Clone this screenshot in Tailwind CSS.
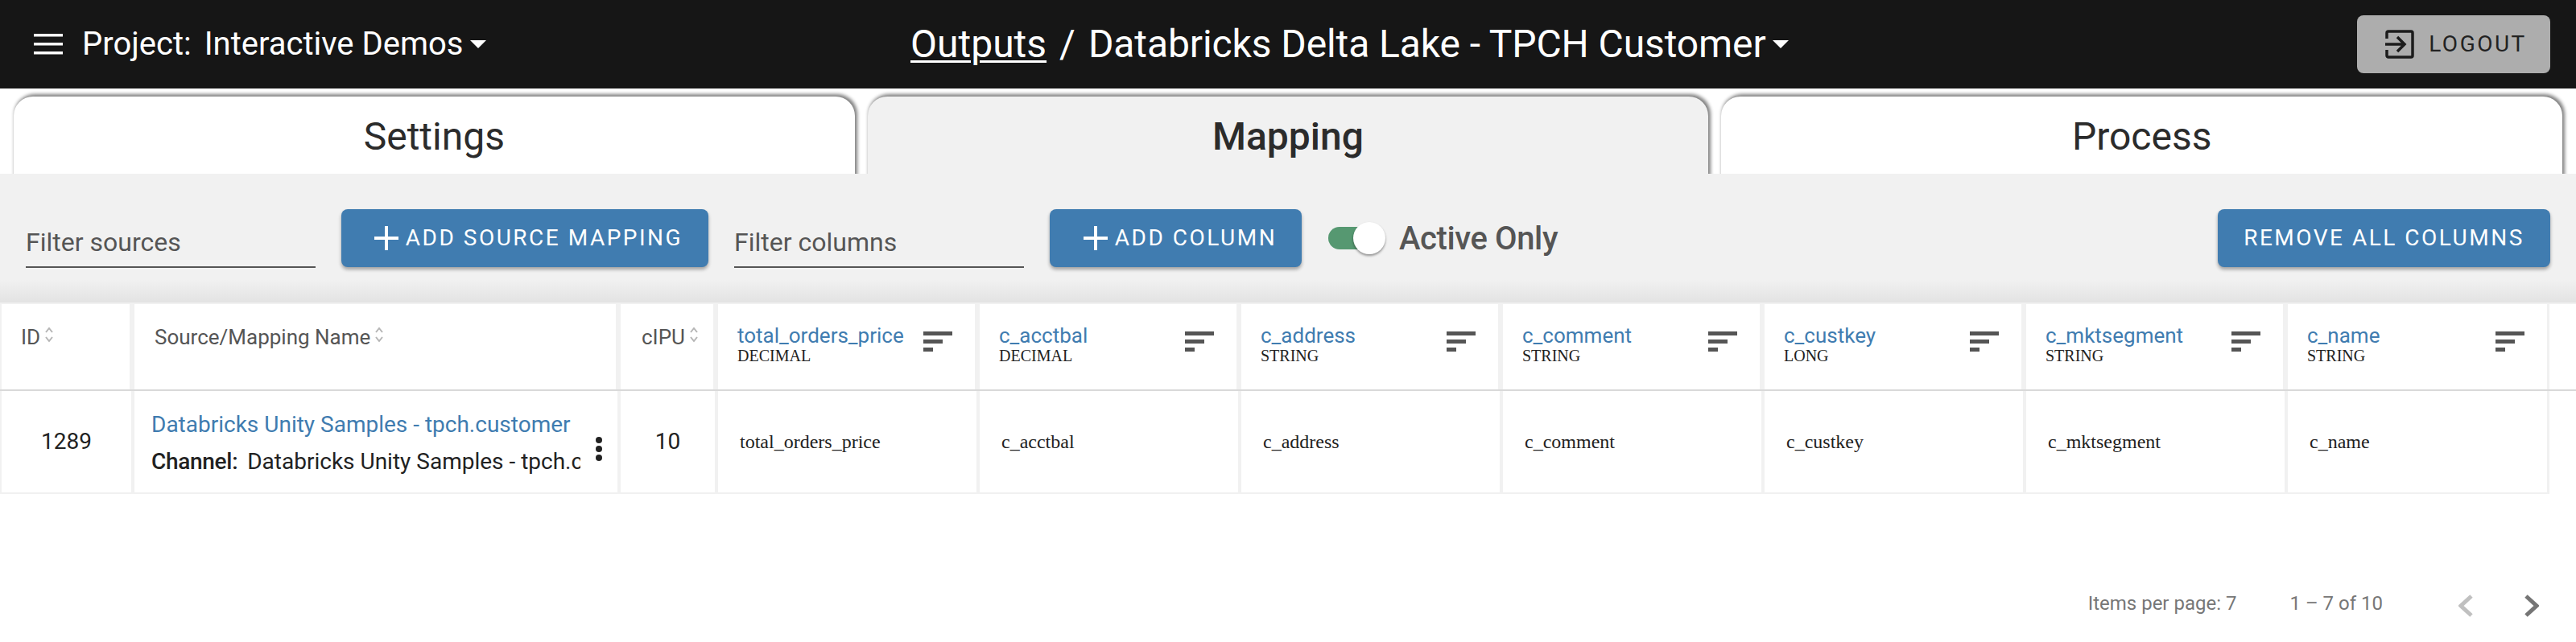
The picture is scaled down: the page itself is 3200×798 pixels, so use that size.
<!DOCTYPE html>
<html lang="en">
<head>
  <meta charset="UTF-8" />
  <title>Mapping</title>
  <script src="https://cdn.jsdelivr.net/npm/@tailwindcss/browser@4"></script>
</head>
<body class="bg-white font-['Roboto',sans-serif] text-[#222] overflow-hidden">
  <!-- top bar -->
  <header class="h-[110px] bg-[#161616] text-white flex items-center">
    <div class="w-[1131px] flex items-center pl-[40px]">
      <svg class="w-[40px] h-[26px] mr-[22px]" viewBox="0 0 40 26" fill="white">
        <rect x="2" y="0" width="36" height="3.5"/><rect x="2" y="11" width="36" height="3.5"/><rect x="2" y="22" width="36" height="3.5"/>
      </svg>
      <span class="text-[40px] whitespace-nowrap"><span class="mr-[16px]">Project:</span>Interactive Demos</span>
      <span class="ml-[8px] w-0 h-0 border-x-[10px] border-x-transparent border-t-[10px] border-t-white"></span>
    </div>
    <div class="flex items-center text-[48px] whitespace-nowrap">
      <a href="#" class="underline underline-offset-4 decoration-[3px]">Outputs</a>
      <span class="mx-[16px]">/</span>
      <span class="tracking-[-0.1px]">Databricks Delta Lake - TPCH Customer</span>
      <span class="ml-[8px] w-0 h-0 border-x-[10px] border-x-transparent border-t-[10px] border-t-white"></span>
    </div>
    <button class="ml-auto mr-[32px] w-[240px] h-[72px] pl-[6px] bg-[#adadad] rounded-[8px] flex items-center justify-center gap-[18px] text-[28px] tracking-[2.5px] text-[#222]">
      <svg class="w-[36px] h-[36px]" viewBox="0 0 36 36" fill="none" stroke="#1c1c1c" stroke-width="3.5">
        <path d="M2 11V4a2 2 0 0 1 2-2h28a2 2 0 0 1 2 2v28a2 2 0 0 1-2 2H4a2 2 0 0 1-2-2v-7"/>
        <path d="M0 18h24M15 9l9 9-9 9"/>
      </svg>
      LOGOUT
    </button>
  </header>

  <!-- tabs -->
  <nav class="h-[106px] pt-[10px] px-[17px] flex gap-[16px] overflow-hidden items-start text-[48px] text-[#2b2b2b]">
    <div class="flex-1 h-[120px] bg-white rounded-t-[24px] shadow-[2px_-2px_4px_1px_#808080] text-center pt-[14px]">Settings</div>
    <div class="flex-1 h-[120px] bg-[#f1f1f1] rounded-t-[24px] shadow-[2px_-2px_4px_1px_#808080] text-center pt-[14px] font-medium">Mapping</div>
    <div class="flex-1 h-[120px] bg-white rounded-t-[24px] shadow-[2px_-2px_4px_1px_#808080] text-center pt-[14px]">Process</div>
  </nav>

  <!-- toolbar -->
  <section class="h-[160px] bg-[linear-gradient(to_bottom,#f1f1f1_82%,#e3e3e3_100%)] flex items-start pt-[44px] pl-[32px] pr-[32px] relative z-10">
    <div class="w-[360px] h-[73px] border-b-[2px] border-[#555] flex items-end pb-[6px] text-[32px] text-[#555] mr-[32px]">Filter sources</div>
    <button class="w-[456px] h-[72px] pl-[9px] bg-[#407cb0] rounded-[8px] shadow-[0_3px_4px_#00000055] text-white text-[28px] tracking-[2.5px] flex items-center justify-center gap-[9px] mr-[32px]">
      <svg class="w-[30px] h-[30px]" viewBox="0 0 30 30" fill="white"><rect x="13" y="0" width="4" height="30"/><rect x="0" y="13" width="30" height="4"/></svg>
      ADD SOURCE MAPPING
    </button>
    <div class="w-[360px] h-[73px] border-b-[2px] border-[#555] flex items-end pb-[6px] text-[32px] text-[#555] mr-[32px]">Filter columns</div>
    <button class="w-[313px] h-[72px] pl-[11px] bg-[#407cb0] rounded-[8px] shadow-[0_3px_4px_#00000055] text-white text-[28px] tracking-[2.5px] flex items-center justify-center gap-[9px] mr-[33px]">
      <svg class="w-[30px] h-[30px]" viewBox="0 0 30 30" fill="white"><rect x="13" y="0" width="4" height="30"/><rect x="0" y="13" width="30" height="4"/></svg>
      ADD COLUMN
    </button>
    <div class="flex items-center h-[72px]">
      <div class="relative w-[70px] h-[28px] mr-[18px]">
        <div class="w-[56px] h-[28px] rounded-full bg-[#569871]"></div>
        <div class="absolute left-[31px] top-[-6px] w-[40px] h-[40px] rounded-full bg-white shadow-[0_2px_3px_#00000066]"></div>
      </div>
      <span class="text-[40px] font-medium text-[#555] tracking-[-0.4px] relative top-[1px]">Active Only</span>
    </div>
    <button class="ml-auto w-[413px] h-[72px] bg-[#407cb0] rounded-[8px] shadow-[0_3px_4px_#00000055] text-white text-[28px] tracking-[2.5px]">REMOVE ALL COLUMNS</button>
  </section>

  <!-- table -->
  <section class="border-t-[2px] border-[#f1f1f1]">
    <div class="flex h-[108px] border-b-[2px] border-[#d9d9d9]">
      <div class="w-[167px] border-l-[2px] border-r-[6px] border-[#f1f1f1] pl-[24px] pt-[22px] text-[26px] text-[#555] flex items-start gap-[6px]">ID
        <svg class="w-[10px] h-[20px] mt-[6px]" viewBox="0 0 10 20" fill="none" stroke="#b5b5b5" stroke-width="2"><path d="M1 7l4-5 4 5M1 13l4 5 4-5"/></svg>
      </div>
      <div class="w-[604px] border-r-[6px] border-[#f1f1f1] pl-[25px] pt-[22px] text-[26px] text-[#555] flex items-start gap-[6px]">Source/Mapping Name
        <svg class="w-[10px] h-[20px] mt-[6px]" viewBox="0 0 10 20" fill="none" stroke="#b5b5b5" stroke-width="2"><path d="M1 7l4-5 4 5M1 13l4 5 4-5"/></svg>
      </div>
      <div class="w-[121px] border-r-[6px] border-[#f1f1f1] pl-[26px] pt-[22px] text-[26px] text-[#555] flex items-start gap-[6px]">cIPU
        <svg class="w-[10px] h-[20px] mt-[6px]" viewBox="0 0 10 20" fill="none" stroke="#b5b5b5" stroke-width="2"><path d="M1 7l4-5 4 5M1 13l4 5 4-5"/></svg>
      </div>
      <div class="w-[325px] border-r-[6px] border-[#f1f1f1] pl-[24px] pr-[28px] pt-[24px] flex justify-between items-start">
        <div><div class="text-[26px] leading-[30px] text-[#407cb0]">total_orders_price</div><div class="font-['Liberation_Serif',serif] text-[20px] leading-[20px] text-[#222]">DECIMAL</div></div>
        <svg class="w-[36px] h-[25px] mt-[10px] shrink-0" viewBox="0 0 36 25" fill="#555"><rect width="36" height="5"/><rect y="10" width="24" height="5"/><rect y="20" width="12" height="5"/></svg>
      </div>
      <div class="w-[325px] border-r-[6px] border-[#f1f1f1] pl-[24px] pr-[28px] pt-[24px] flex justify-between items-start">
        <div><div class="text-[26px] leading-[30px] text-[#407cb0]">c_acctbal</div><div class="font-['Liberation_Serif',serif] text-[20px] leading-[20px] text-[#222]">DECIMAL</div></div>
        <svg class="w-[36px] h-[25px] mt-[10px] shrink-0" viewBox="0 0 36 25" fill="#555"><rect width="36" height="5"/><rect y="10" width="24" height="5"/><rect y="20" width="12" height="5"/></svg>
      </div>
      <div class="w-[325px] border-r-[6px] border-[#f1f1f1] pl-[24px] pr-[28px] pt-[24px] flex justify-between items-start">
        <div><div class="text-[26px] leading-[30px] text-[#407cb0]">c_address</div><div class="font-['Liberation_Serif',serif] text-[20px] leading-[20px] text-[#222]">STRING</div></div>
        <svg class="w-[36px] h-[25px] mt-[10px] shrink-0" viewBox="0 0 36 25" fill="#555"><rect width="36" height="5"/><rect y="10" width="24" height="5"/><rect y="20" width="12" height="5"/></svg>
      </div>
      <div class="w-[325px] border-r-[6px] border-[#f1f1f1] pl-[24px] pr-[28px] pt-[24px] flex justify-between items-start">
        <div><div class="text-[26px] leading-[30px] text-[#407cb0]">c_comment</div><div class="font-['Liberation_Serif',serif] text-[20px] leading-[20px] text-[#222]">STRING</div></div>
        <svg class="w-[36px] h-[25px] mt-[10px] shrink-0" viewBox="0 0 36 25" fill="#555"><rect width="36" height="5"/><rect y="10" width="24" height="5"/><rect y="20" width="12" height="5"/></svg>
      </div>
      <div class="w-[325px] border-r-[6px] border-[#f1f1f1] pl-[24px] pr-[28px] pt-[24px] flex justify-between items-start">
        <div><div class="text-[26px] leading-[30px] text-[#407cb0]">c_custkey</div><div class="font-['Liberation_Serif',serif] text-[20px] leading-[20px] text-[#222]">LONG</div></div>
        <svg class="w-[36px] h-[25px] mt-[10px] shrink-0" viewBox="0 0 36 25" fill="#555"><rect width="36" height="5"/><rect y="10" width="24" height="5"/><rect y="20" width="12" height="5"/></svg>
      </div>
      <div class="w-[325px] border-r-[6px] border-[#f1f1f1] pl-[24px] pr-[28px] pt-[24px] flex justify-between items-start">
        <div><div class="text-[26px] leading-[30px] text-[#407cb0]">c_mktsegment</div><div class="font-['Liberation_Serif',serif] text-[20px] leading-[20px] text-[#222]">STRING</div></div>
        <svg class="w-[36px] h-[25px] mt-[10px] shrink-0" viewBox="0 0 36 25" fill="#555"><rect width="36" height="5"/><rect y="10" width="24" height="5"/><rect y="20" width="12" height="5"/></svg>
      </div>
      <div class="w-[325px] border-r-[3px] border-[#f1f1f1] pl-[24px] pr-[28px] pt-[24px] flex justify-between items-start">
        <div><div class="text-[26px] leading-[30px] text-[#407cb0]">c_name</div><div class="font-['Liberation_Serif',serif] text-[20px] leading-[20px] text-[#222]">STRING</div></div>
        <svg class="w-[36px] h-[25px] mt-[10px] shrink-0" viewBox="0 0 36 25" fill="#555"><rect width="36" height="5"/><rect y="10" width="24" height="5"/><rect y="20" width="12" height="5"/></svg>
      </div>
    </div>
    <div class="flex w-[3167px] h-[128px] border-b-[2px] border-[#f1f1f1] items-stretch">
      <div class="w-[167px] border-r-[4px] border-l-[2px] border-[#f1f1f1] flex items-center justify-center text-[28px] text-[#222]">1289</div>
      <div class="w-[604px] border-r-[4px] border-[#f1f1f1] pl-[21px] flex flex-col justify-center relative">
        <a href="#" class="text-[28px] leading-[40px] mt-[4px] text-[#407cb0] whitespace-nowrap">Databricks Unity Samples - tpch.customer</a>
        <div class="text-[28px] leading-[40px] mt-[6px] w-[533px] overflow-hidden whitespace-nowrap text-[#222]"><b class="font-medium tracking-[-0.3px] mr-[12px]">Channel:</b>Databricks Unity Samples - tpch.customer</div>
        <svg class="absolute left-[571px] top-[56px] w-[12px] h-[32px]" viewBox="0 0 12 32" fill="#222"><circle cx="6" cy="5" r="4"/><circle cx="6" cy="16" r="4"/><circle cx="6" cy="27" r="4"/></svg>
      </div>
      <div class="w-[121px] border-r-[4px] border-[#f1f1f1] flex items-center justify-center text-[28px] text-[#222]">10</div>
      <div class="w-[325px] border-r-[4px] border-[#f1f1f1] pl-[27px] flex items-center font-['Liberation_Serif',serif] text-[24px] text-[#222]">total_orders_price</div>
      <div class="w-[325px] border-r-[4px] border-[#f1f1f1] pl-[27px] flex items-center font-['Liberation_Serif',serif] text-[24px] text-[#222]">c_acctbal</div>
      <div class="w-[325px] border-r-[4px] border-[#f1f1f1] pl-[27px] flex items-center font-['Liberation_Serif',serif] text-[24px] text-[#222]">c_address</div>
      <div class="w-[325px] border-r-[4px] border-[#f1f1f1] pl-[27px] flex items-center font-['Liberation_Serif',serif] text-[24px] text-[#222]">c_comment</div>
      <div class="w-[325px] border-r-[4px] border-[#f1f1f1] pl-[27px] flex items-center font-['Liberation_Serif',serif] text-[24px] text-[#222]">c_custkey</div>
      <div class="w-[325px] border-r-[4px] border-[#f1f1f1] pl-[27px] flex items-center font-['Liberation_Serif',serif] text-[24px] text-[#222]">c_mktsegment</div>
      <div class="w-[325px] border-r-[3px] border-[#f1f1f1] pl-[27px] flex items-center font-['Liberation_Serif',serif] text-[24px] text-[#222]">c_name</div>
    </div>
  </section>

  <!-- paginator -->
  <footer class="h-[60px] mt-[106px] flex items-center justify-end text-[24px] text-[#777] pr-[46px]">
    <span class="mr-[66px]">Items per page: 7</span>
    <span class="mr-[94px]">1 – 7 of 10</span>
    <svg class="w-[18px] h-[28px] mr-[64px] mt-[6px]" viewBox="0 0 18 28" fill="none" stroke="#c0c0c0" stroke-width="5"><path d="M16 2L3 14l13 12"/></svg>
    <svg class="w-[18px] h-[28px] mt-[6px]" viewBox="0 0 18 28" fill="none" stroke="#757575" stroke-width="5"><path d="M2 2l13 12L2 26"/></svg>
  </footer>
</body>
</html>
